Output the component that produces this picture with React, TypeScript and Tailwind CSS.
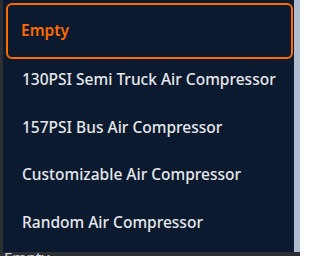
const options = [
  "130PSI Semi Truck Air Compressor",
  "157PSI Bus Air Compressor",
  "Customizable Air Compressor",
  "Random Air Compressor",
];

export default function App() {
  return (
    <div
      className="w-[300px] h-[256px] overflow-hidden bg-[#2b2e33] flex flex-col"
      style={{ fontFamily: '"Noto Sans", "Open Sans", sans-serif' }}
    >
      <div className="flex h-[252px] shrink-0">
        <div className="w-[3px] shrink-0 bg-[#2b2e33]" />
        <div className="w-[291px] shrink-0 bg-[#0c1a2f] pt-[3px] pl-[3px] pr-[1px]">
          <div className="h-[56px] rounded-[6px] border-[2.5px] border-[#ff6a00] flex items-center pl-[13px] text-[15.5px] font-semibold text-[#ff6a00]">
            Empty
          </div>
          <ul className="-mt-[3px]">
            {options.map((o) => (
              <li
                key={o}
                className="h-[47.5px] flex items-center pl-[16px] text-[15.5px] font-medium text-[#e6e8ec]"
              >
                {o}
              </li>
            ))}
          </ul>
        </div>
        <div className="flex-1 bg-[#aebbd0]" />
      </div>
      <div className="pl-[4px] text-[15px] font-medium leading-[20px] text-[#c9ccd1] -mt-[5px]">
        Empty
      </div>
    </div>
  );
}
